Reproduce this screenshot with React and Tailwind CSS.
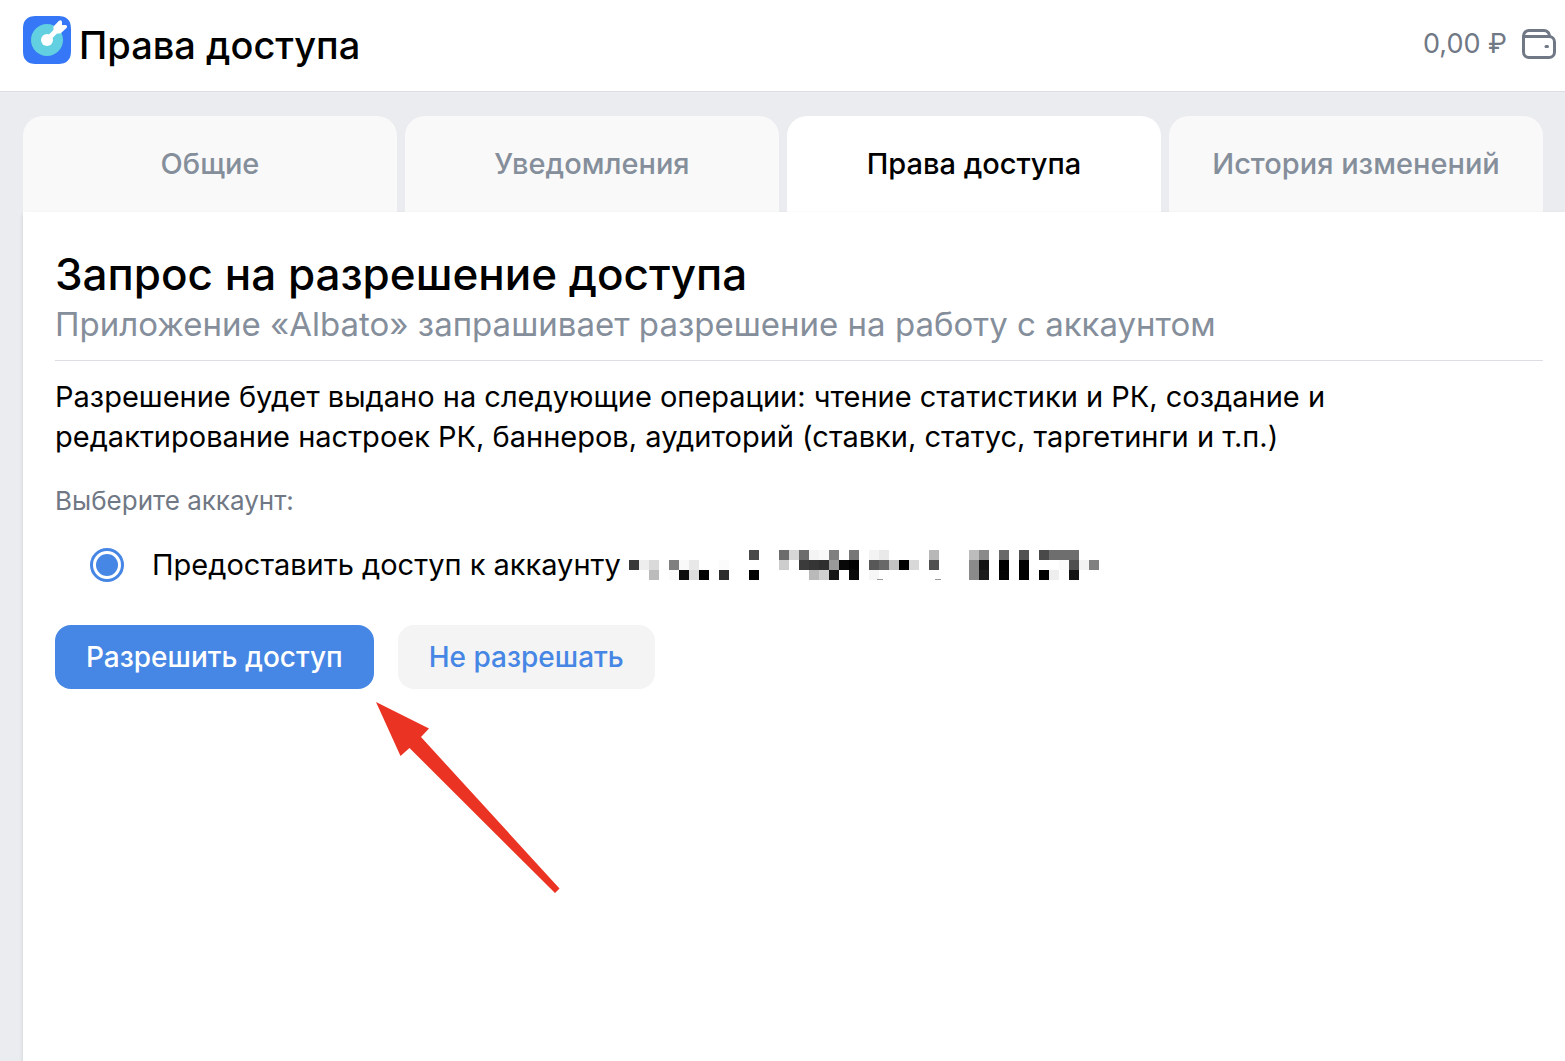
import React, { useState } from 'react';

const tabs = ['Общие', 'Уведомления', 'Права доступа', 'История изменений'];

// Hidden account name: [column, row, shade], every cell is 10x10
const maskCells = [
  [0, 1, '#393939'], [1, 1, '#eeeeee'], [2, 1, '#dadada'], [2, 2, '#bbbbbb'],
  [4, 1, '#808080'], [4, 2, '#fafafa'], [5, 1, '#f9f9f9'], [5, 2, '#0d0d0d'],
  [6, 1, '#e8e8e8'], [6, 2, '#dddddd'], [7, 2, '#000000'], [9, 1, '#fbfbfb'],
  [9, 2, '#2d2d2d'], [12, 0, '#484848'], [12, 2, '#000000'], [15, 0, '#6c6c6c'],
  [15, 1, '#cdcdcd'], [16, 0, '#d6d6d6'], [17, 0, '#6c6c6c'], [17, 1, '#3b3b3b'],
  [18, 0, '#f4f4f4'], [18, 1, '#353535'], [18, 2, '#b9b9b9'], [19, 0, '#f9f9f9'],
  [19, 1, '#2f2f2f'], [19, 2, '#d0d0d0'], [20, 0, '#808080'], [20, 1, '#999999'],
  [20, 2, '#161616'], [21, 1, '#080808'], [22, 0, '#777777'], [22, 1, '#000000'],
  [22, 2, '#0a0a0a'], [24, 0, '#f3f3f3'], [24, 1, '#585858'], [24, 2, '#f6f6f6'],
  [25, 0, '#e9e9e9'], [25, 1, '#686868'], [26, 1, '#c2c2c2'], [27, 1, '#000000'],
  [28, 1, '#d8d8d8'], [30, 0, '#b8b8b8'], [30, 1, '#505050'], [34, 0, '#bcbcbc'],
  [34, 1, '#8a8a8a'], [34, 2, '#8a8a8a'], [35, 0, '#8a8a8a'], [35, 1, '#141414'],
  [35, 2, '#1c1c1c'], [37, 0, '#696969'], [37, 1, '#000000'], [37, 2, '#050505'],
  [39, 0, '#515151'], [39, 1, '#000000'], [39, 2, '#000000'], [41, 0, '#494949'],
  [41, 2, '#000000'], [42, 0, '#6e6e6e'], [42, 2, '#eeeeee'], [43, 0, '#6e6e6e'],
  [43, 1, '#fafafa'], [44, 0, '#6e6e6e'], [44, 1, '#505050'], [44, 2, '#141414'],
  [45, 1, '#f2f2f2'], [46, 1, '#808080'],
];

const Logo = () => (
  <svg className="size-12 shrink-0" viewBox="0 0 48 48" aria-hidden="true">
    <path
      d="M24 0H34C40 0 42.500 1 44.700 3.300C47 5.500 48 8 48 14V34C48 40 47 42.500 44.700 44.700C42.500 47 40 48 34 48H14C8 48 5.500 47 3.300 44.700C1 42.500 0 40 0 34V14C0 8 1 5.500 3.300 3.300C5.500 1 8 0 14 0Z"
      fill="#3577f6"
    />
    <circle cx="24" cy="24" r="16" fill="#62d0e0" />
    <circle cx="24" cy="24" r="6" fill="#fff" />
    <path d="M24 24L35 13" stroke="#fff" strokeWidth="5" />
    <path
      d="M30.500 10.500L36 4.800Q38.500 3 39 6V9H42.500Q45 9.500 43.500 12L38 17Q37.500 17.500 36 17.500H33L30.500 15V12Z"
      fill="#fff"
    />
  </svg>
);

const WalletIcon = () => (
  <svg className="h-8 w-9" viewBox="0 0 36 32" fill="none" stroke="currentColor" strokeWidth="3" aria-hidden="true">
    <path d="M2.500 8V24A5.500 5.500 0 0 0 8 29.500H28A5.500 5.500 0 0 0 33.500 24V14A5.500 5.500 0 0 0 28 8.500H2.500" />
    <path d="M2.500 9V8A5.500 5.500 0 0 1 8 2.500H23A5.500 5.500 0 0 1 28.500 8V9" />
    <path d="M25 18.500H26.500" strokeLinecap="round" />
  </svg>
);

const MaskedAccount = () => (
  <svg className="h-[30px] w-[470px] shrink-0" viewBox="0 0 470 30" shapeRendering="crispEdges" role="img" aria-label="Аккаунт скрыт">
    {maskCells.map(([col, row, shade]) => (
      <rect key={`${col}-${row}`} x={col * 10} y={row * 10} width="10" height="10" fill={shade} />
    ))}
    <path d="M248 29.500H254M306 29.500H312" stroke="#999999" />
  </svg>
);

const Arrow = () => (
  <svg className="pointer-events-none absolute left-full top-full ml-0.5 mt-3 h-48 w-46" viewBox="0 0 184 192" aria-hidden="true">
    <path d="M0 1L53 27.500L45 36L183.500 187.500L179 192L33.500 47L24.500 55Z" fill="#eb3323" />
  </svg>
);

const App = () => {
  const [activeTab, setActiveTab] = useState('Права доступа');

  return (
    <div className="flex min-h-screen flex-col bg-[#ebecf0] font-['Inter',sans-serif] text-black">
      {/* Header */}
      <header className="flex h-[92px] items-center justify-between border-b border-[#dcdee3] bg-white pl-[23px] pr-2">
        <div className="flex items-center gap-2 pb-3">
          <Logo />
          <h1 className="pt-2.5 text-[38px] leading-12 font-medium">Права доступа</h1>
        </div>
        <a href="#balance" className="flex items-center gap-3.5 pb-1 text-[#707885]">
          <span className="text-[27px] leading-8">0,00 ₽</span>
          <WalletIcon />
        </a>
      </header>

      <main className="flex grow flex-col pl-[23px] pt-6">
        {/* Tabs */}
        <div role="tablist" className="grid grid-cols-4 gap-2 pr-[22px]">
          {tabs.map(tab => (
            <button
              key={tab}
              role="tab"
              aria-selected={activeTab === tab}
              onClick={() => setActiveTab(tab)}
              className={`h-24 cursor-pointer rounded-t-[20px] text-[29px] font-medium whitespace-nowrap ${
                activeTab === tab ? 'bg-white text-black' : 'bg-[#f9f9f9] text-[#858e9b]'
              }`}
            >
              {tab}
            </button>
          ))}
        </div>

        {/* Access request */}
        <section className="grow bg-white pl-8 pr-[22px] pt-8 shadow-[0_2px_4px_rgba(0,0,0,0.12)]">
          <h2 className="text-[44px] leading-15 font-medium">Запрос на разрешение доступа</h2>
          <p className="border-b border-[#dcdee3] pb-4 text-[33px] leading-10 text-[#858e9b]">
            Приложение «Albato» запрашивает разрешение на работу с аккаунтом
          </p>
          <p className="max-w-[1320px] pt-4 text-[29px] leading-10">
            Разрешение будет выдано на следующие операции: чтение статистики и РК, создание и
            редактирование настроек РК, баннеров, аудиторий (ставки, статус, таргетинги и т.п.)
          </p>
          <fieldset className="pt-6">
            <legend className="float-left w-full text-[26px] leading-10 text-[#707885]">Выберите аккаунт:</legend>
            <label className="clear-both flex items-center pt-6 pl-[35px]">
              <input
                type="radio"
                name="account"
                defaultChecked
                className="size-[34px] shrink-0 appearance-none rounded-full border-3 border-[#4686e4] p-[3px] checked:bg-[#4686e4] bg-clip-content"
              />
              <span className="pl-7 pr-2 text-[29px] leading-10 whitespace-nowrap">Предоставить доступ к аккаунту</span>
              <MaskedAccount />
            </label>
          </fieldset>
          <div className="flex gap-6 pt-10">
            <div className="relative">
              <button className="h-16 cursor-pointer rounded-2xl bg-[#4686e4] px-[31px] text-[28px] font-medium text-white">
                Разрешить доступ
              </button>
              <Arrow />
            </div>
            <button className="h-16 cursor-pointer rounded-2xl bg-[#f4f4f4] px-[31px] text-[28px] font-medium text-[#4686e4]">
              Не разрешать
            </button>
          </div>
        </section>
      </main>
    </div>
  );
};

export default App;
